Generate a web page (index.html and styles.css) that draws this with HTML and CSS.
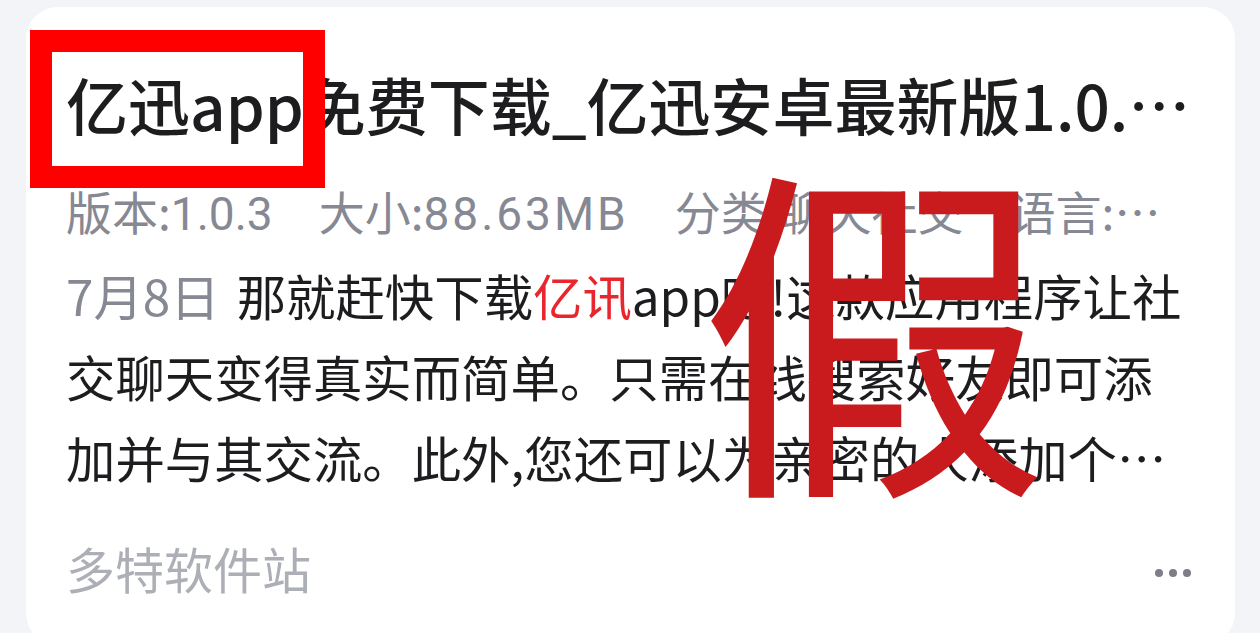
FILE: index.html
```html
<!DOCTYPE html>
<html lang="zh-CN">
<head>
<meta charset="utf-8">
<title>亿迅app免费下载</title>
<link rel="stylesheet" href="styles.css">
</head>
<body>
<div class="card">
  <h1 class="title">亿迅app免费下载_亿迅安卓最新版1.0.3下载</h1>
  <div class="meta">
    <span class="meta-item">版本:<span class="num">1.0.3</span></span><span class="meta-item">大小:<span class="num wide">88.63MB</span></span><span class="meta-item">分类:聊天社交</span><span class="meta-item">语言:中文</span>
  </div>
  <p class="desc"><span class="date">7月8日</span> 那就赶快下载<em class="hl">亿讯</em>app吧!这款应用程序让社交聊天变得真实而简单。只需在线搜索好友即可添加并与其交流。此外,您还可以为亲密的人添加个性化的备注和标签。</p>
  <div class="footer">
    <span class="source">多特软件站</span>
    <span class="more"><i></i><i></i><i></i></span>
  </div>
</div>
<div class="mark-box"></div>
<div class="fake">假</div>
</body>
</html>
```

FILE: styles.css
```css
html, body {
  margin: 0;
  padding: 0;
}
body {
  background: #f3f4f8;
  font-family: "Noto Sans CJK SC", "Noto Sans", sans-serif;
  width: 1260px;
  height: 633px;
  overflow: hidden;
  position: relative;
}
.card {
  margin: 7px 0 0 26px;
  width: 1209px;
  height: 638px;
  box-sizing: border-box;
  padding: 57px 44px 0 40px;
  background: #ffffff;
  border-radius: 32px;
}
.title {
  margin: 0;
  font-size: 62px;
  font-weight: 500;
  line-height: 80px;
  color: #1d1d1f;
  white-space: nowrap;
  overflow: hidden;
  text-overflow: ellipsis;
}
.meta {
  margin-top: 36px;
  font-size: 46px;
  line-height: 60px;
  color: #868893;
  white-space: nowrap;
  overflow: hidden;
  text-overflow: ellipsis;
}
.meta .num {
  font-family: Roboto, "Noto Sans CJK SC", sans-serif;
}
.meta .wide {
  letter-spacing: 3px;
}
.meta-item + .meta-item {
  margin-left: 46px;
}
.desc {
  margin: 10px 0 0;
  font-size: 49.4px;
  line-height: 81px;
  color: #1d1d1f;
  display: -webkit-box;
  -webkit-box-orient: vertical;
  -webkit-line-clamp: 3;
  overflow: hidden;
}
.date {
  color: #868893;
  margin-right: 6px;
}
.hl {
  font-style: normal;
  color: #e8262d;
}
.footer {
  margin-top: 41px;
  display: flex;
  justify-content: space-between;
  align-items: center;
  height: 60px;
}
.source {
  font-size: 49px;
  line-height: 60px;
  color: #adafb6;
}
.more {
  display: flex;
  gap: 6px;
  margin-top: 10px;
}
.more i {
  width: 8px;
  height: 8px;
  border-radius: 50%;
  background: #7d7f88;
}
.mark-box {
  position: absolute;
  left: 30px;
  top: 30px;
  width: 295px;
  height: 158px;
  box-sizing: border-box;
  border: 22px solid #ff0000;
}
.fake {
  position: absolute;
  left: 699px;
  top: 143px;
  width: 350px;
  height: 350px;
  font-size: 350px;
  font-weight: 400;
  line-height: 350px;
  text-align: center;
  color: #c91a1d;
}
```
